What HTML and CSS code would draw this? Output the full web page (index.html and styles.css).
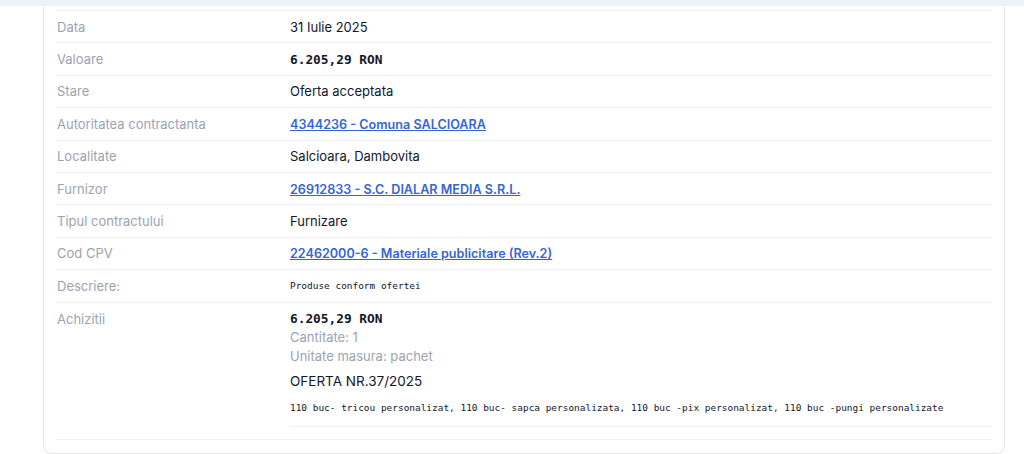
FILE: index.html
```html
<!DOCTYPE html>
<html lang="ro">
<head>
    <meta charset="UTF-8">
    <title>Detalii achizitie</title>
    <link rel="stylesheet" href="styles.css">
</head>
<body>
    <div class="top-band"></div>
    <div class="page">
        <div class="card">
            <div class="row">
                <div class="label">Data</div>
                <div class="value">31 Iulie 2025</div>
            </div>
            <div class="row">
                <div class="label">Valoare</div>
                <div class="value money">6.205,29 RON</div>
            </div>
            <div class="row">
                <div class="label">Stare</div>
                <div class="value">Oferta acceptata</div>
            </div>
            <div class="row">
                <div class="label">Autoritatea contractanta</div>
                <div class="value"><a href="#">4344236 - Comuna SALCIOARA</a></div>
            </div>
            <div class="row">
                <div class="label">Localitate</div>
                <div class="value">Salcioara, Dambovita</div>
            </div>
            <div class="row">
                <div class="label">Furnizor</div>
                <div class="value"><a href="#">26912833 - S.C. DIALAR MEDIA S.R.L.</a></div>
            </div>
            <div class="row">
                <div class="label">Tipul contractului</div>
                <div class="value">Furnizare</div>
            </div>
            <div class="row">
                <div class="label">Cod CPV</div>
                <div class="value"><a href="#">22462000-6 - Materiale publicitare (Rev.2)</a></div>
            </div>
            <div class="row">
                <div class="label">Descriere:</div>
                <div class="value mono-small">Produse conform ofertei</div>
            </div>
            <div class="row row-top">
                <div class="label">Achizitii</div>
                <div class="value">
                    <div class="item">
                        <div class="money">6.205,29 RON</div>
                        <div class="muted">Cantitate: 1</div>
                        <div class="muted">Unitate masura: pachet</div>
                        <div class="item-title">OFERTA NR.37/2025</div>
                        <div class="mono-small">110 buc- tricou personalizat, 110 buc- sapca personalizata, 110 buc -pix personalizat, 110 buc -pungi personalizate</div>
                    </div>
                </div>
            </div>
        </div>
    </div>
</body>
</html>
```

FILE: styles.css
```css
body {
    margin: 0;
    font-family: Inter, "Noto Sans", sans-serif;
    background: #fff;
    color: #111827;
}

.top-band {
    height: 6px;
    background: #eef2f7;
}

.page {
    padding: 0 19px 1px 43px;
}

.card {
    border: 1px solid #e5e7eb;
    border-top: none;
    border-radius: 0 0 8px 8px;
    padding: 4px 12px 14px 12px;
}

.row {
    display: flex;
    align-items: center;
    min-height: 31.4px;
    border-top: 1px solid #f0f1f3;
    border-bottom: 1px solid #f0f1f3;
    margin-bottom: -1px;
    font-size: 13px;
}

.row-top {
    align-items: flex-start;
    padding-top: 8px;
}

.label {
    width: 233px;
    flex-shrink: 0;
    padding-left: 1px;
    color: #9ca3af;
}

.value {
    flex: 1;
}

.value a {
    color: #3565d4;
    font-weight: 600;
    font-size: 12.6px;
    text-decoration: underline;
}

.money {
    font-family: "DejaVu Sans Mono", "Liberation Mono", monospace;
    font-weight: bold;
    font-size: 12.8px;
}

.mono-small {
    font-family: "DejaVu Sans Mono", "Liberation Mono", monospace;
    font-size: 9.45px;
}

.item {
    border-bottom: 1px solid #f0f1f3;
    padding-bottom: 13px;
    margin-bottom: 12px;
}

.muted {
    color: #9ca3af;
    margin-top: 3px;
}

.item-title {
    font-size: 13.5px;
    margin-top: 9px;
    margin-bottom: 13px;
}
```
